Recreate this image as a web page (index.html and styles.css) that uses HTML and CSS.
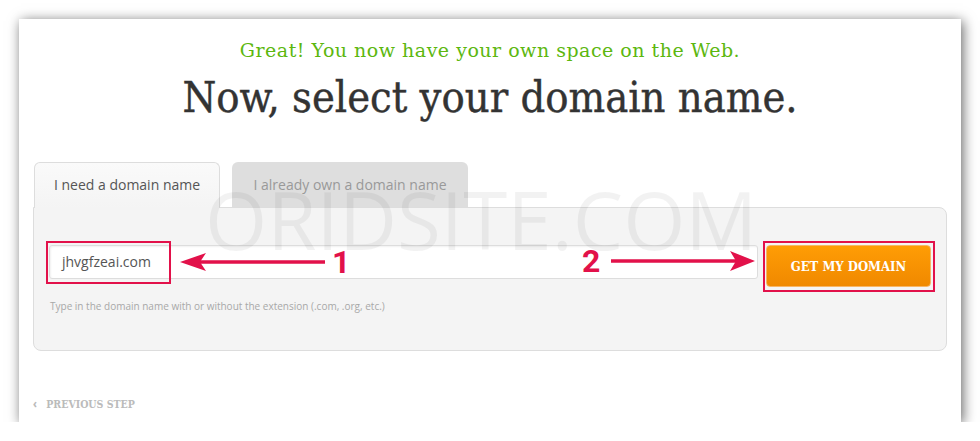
FILE: index.html
```html
<!DOCTYPE html>
<html lang="en">
<head>
  <meta charset="UTF-8">
  <title>Select your domain name</title>
  <link rel="stylesheet" href="styles.css">
</head>
<body>
  <div class="page">
    <div class="card">
      <p class="kicker">Great! You now have your own space on the Web.</p>
      <h1 class="title">Now, select your domain name.</h1>

      <div class="box">
        <div class="tabs">
          <div class="tab tab-active">I need a domain name</div>
          <div class="tab">I already own a domain name</div>
        </div>
        <div class="panel">
          <div class="search-row">
            <div class="domain-input">jhvgfzeai.com</div>
            <button class="get-btn">GET MY DOMAIN</button>
          </div>
          <p class="hint">Type in the domain name with or without the extension (.com, .org, etc.)</p>

          <!-- annotations drawn over the form -->
          <div class="mark mark-input"></div>
          <div class="mark mark-btn"></div>
          <svg class="arrows" width="914" height="144" viewBox="0 0 914 144">
            <line x1="166" y1="55" x2="292" y2="55" stroke="#e2114a" stroke-width="3.5"/>
            <polygon points="147,55 173,46 167,55 173,64" fill="#e2114a"/>
            <text x="299" y="66" class="num">1</text>
            <text x="549" y="65" class="num">2</text>
            <line x1="578" y1="54" x2="705" y2="54" stroke="#e2114a" stroke-width="3.5"/>
            <polygon points="722,54 697,44 703,54 697,64" fill="#e2114a"/>
          </svg>
        </div>
      </div>

      <a class="prev" href="#"><span class="chev">&lsaquo;</span> PREVIOUS STEP</a>

      <div class="watermark">ORIDSITE.COM</div>
    </div>
  </div>
</body>
</html>
```

FILE: styles.css
```css
body {
  margin: 0;
  background: #fff;
}
.page {
  padding: 19px 19px 0;
}
/* main white sheet with its drop shadow */
.card {
  position: relative;
  width: 942px;
  height: 403px;
  box-sizing: border-box;
  padding-top: 19px;
  background: #fff;
  box-shadow: 2px 2px 12px rgba(0,0,0,0.6);
  overflow: hidden;
}
.kicker {
  margin: 0;
  text-align: center;
  font-family: "DejaVu Serif", serif;
  font-size: 19px;
  line-height: 24px;
  letter-spacing: 0.5px;
  color: #5cb70f;
}
.title {
  margin: 10px 0 0;
  text-align: center;
  font-family: "DejaVu Serif Condensed", "DejaVu Serif", serif;
  font-stretch: condensed;
  font-weight: normal;
  font-size: 43px;
  line-height: 50px;
  color: #333;
  -webkit-text-stroke: 0.4px #333;
}
.box {
  margin: 40px 14px 0;
}
.tabs {
  display: flex;
  gap: 12px;
  margin-left: 1px;
  position: relative;
  z-index: 2;
}
.tab {
  box-sizing: border-box;
  width: 236px;
  height: 45px;
  padding-top: 13px;
  text-align: center;
  font-family: "Open Sans", sans-serif;
  font-size: 14px;
  line-height: 20px;
  color: #999;
  background: #dedede;
  border-radius: 6px 6px 0 0;
}
.tab-active {
  width: 186px;
  height: 46px;
  margin-bottom: -1px;
  color: #555;
  background: linear-gradient(#fafafa, #f4f4f4);
  border: 1px solid #ddd;
  border-bottom: none;
  padding-top: 12px;
}
.panel {
  position: relative;
  box-sizing: border-box;
  height: 144px;
  padding: 37px 15px 0;
  background: #f4f4f4;
  border: 1px solid #ddd;
  border-radius: 0 8px 8px 8px;
}
.search-row {
  display: flex;
  align-items: flex-start;
  gap: 8px;
}
.domain-input {
  flex: 1;
  box-sizing: border-box;
  height: 34px;
  padding-left: 12px;
  font-family: "Open Sans", sans-serif;
  font-size: 14px;
  line-height: 32px;
  color: #555;
  background: #fff;
  border: 1px solid #ddd;
  border-radius: 3px;
  box-shadow: inset 1px 1px 2px rgba(0,0,0,0.06);
}
.get-btn {
  width: 165px;
  height: 42px;
  padding: 0;
  border: 1px solid #f7b566;
  border-radius: 4px;
  background: linear-gradient(#ff9d05, #f08900);
  color: #fff;
  font-family: "DejaVu Serif Condensed", "DejaVu Serif", serif;
  font-stretch: condensed;
  font-weight: bold;
  font-size: 13px;
}
.hint {
  margin: 12px 0 0 1px;
  font-family: "Open Sans", sans-serif;
  font-size: 10px;
  line-height: 14px;
  color: #a8a8a8;
}
.mark {
  position: absolute;
  border: 2px solid #e2114a;
  box-sizing: border-box;
}
.mark-input {
  left: 12px;
  top: 33px;
  width: 125px;
  height: 43px;
}
.mark-btn {
  left: 729px;
  top: 33px;
  width: 172px;
  height: 51px;
}
.arrows {
  position: absolute;
  left: -1px;
  top: -1px;
}
.num {
  font-family: Roboto, sans-serif;
  font-weight: bold;
  font-size: 32px;
  fill: #e2114a;
}
.prev {
  display: block;
  margin: 45px 0 0 14px;
  font-family: "DejaVu Serif Condensed", "DejaVu Serif", serif;
  font-stretch: condensed;
  font-weight: bold;
  font-size: 10.5px;
  line-height: 14px;
  color: #bbb;
  text-decoration: none;
}
.chev {
  margin-right: 6px;
  font-family: "Open Sans", sans-serif;
  font-size: 13px;
}
/* faint watermark over the whole form */
.watermark {
  position: absolute;
  left: 186px;
  top: 160px;
  font-family: "Open Sans", sans-serif;
  font-size: 80px;
  line-height: 80px;
  color: rgba(0,0,0,0.05);
  pointer-events: none;
  z-index: 5;
}
```
